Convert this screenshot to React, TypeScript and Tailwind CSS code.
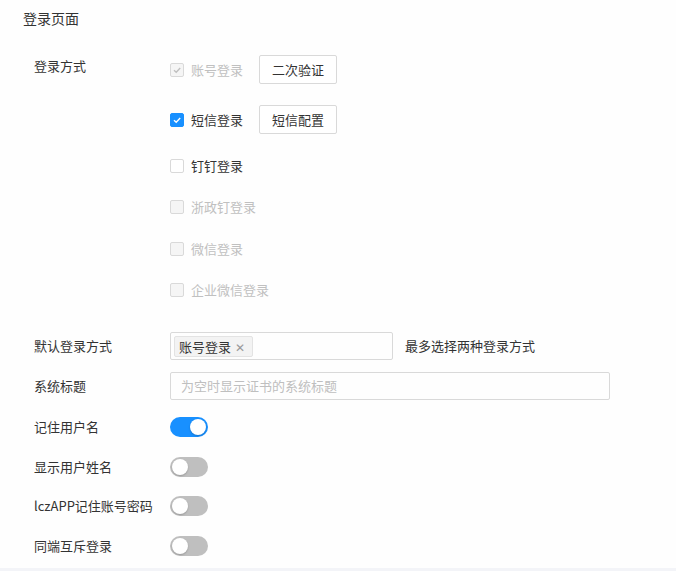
import React from "react";

const font = { fontFamily: '"Noto Sans CJK SC", "Microsoft YaHei", sans-serif' };

function Check({ state }: { state: "dis-checked" | "checked" | "empty" | "dis" }) {
  const cls =
    state === "checked"
      ? "bg-[#1890ff] border-[#1890ff]"
      : state === "empty"
      ? "bg-white border-[#d9d9d9]"
      : "bg-[#f5f5f5] border-[#d9d9d9]";
  return (
    <span className={`w-[14px] h-[14px] rounded-[2px] border flex items-center justify-center ${cls}`}>
      {(state === "checked" || state === "dis-checked") && (
        <svg width="10" height="10" viewBox="0 0 10 10">
          <path
            d="M2 5.2 L4.2 7.2 L8.2 3"
            fill="none"
            stroke={state === "checked" ? "#fff" : "#bfbfbf"}
            strokeWidth="1.4"
          />
        </svg>
      )}
    </span>
  );
}

function Item({
  state,
  label,
  btn,
  className = "",
}: {
  state: "dis-checked" | "checked" | "empty" | "dis";
  label: string;
  btn?: string;
  className?: string;
}) {
  const disabled = state === "dis" || state === "dis-checked";
  return (
    <div className={`flex items-center ${btn ? "h-[29px]" : "h-[20px]"} ${className}`}>
      <Check state={state} />
      <span className={`ml-[7px] text-[13px] leading-[20px] ${disabled ? "text-[#c0c0c0]" : "text-[#333]"}`}>{label}</span>
      {btn && (
        <button className="ml-[16px] h-[29px] w-[78px] border border-[#d9d9d9] rounded-[2px] bg-white text-[13px] text-[#333]">
          {btn}
        </button>
      )}
    </div>
  );
}

function ToggleRow({ label, on, className = "" }: { label: string; on?: boolean; className?: string }) {
  return (
    <div className={`flex items-center h-[20px] ${className}`}>
      <span className="w-[136px] text-[13px] leading-[20px] text-[#333]">{label}</span>
      <span
        className={`relative w-[38px] h-[20px] rounded-full ${on ? "bg-[#1890ff]" : "bg-[#bfbfbf]"}`}
      >
        <span
          className={`absolute top-[2px] w-[16px] h-[16px] rounded-full bg-white shadow-[0_1px_2px_rgba(0,0,0,0.2)] ${
            on ? "left-[20px]" : "left-[2px]"
          }`}
        />
      </span>
    </div>
  );
}

export default function App() {
  return (
    <div className="h-[571px] flex flex-col bg-white" style={font}>
      <div className="flex-1 bg-[#fefefe]">
        <div className="pt-[8px] pl-[23px] h-[28px] text-[14px] leading-[20px] text-[#333]">登录页面</div>
        <div className="pl-[34px]">
          <div className="flex mt-[27px]">
            <span className="w-[136px] mt-[1px] text-[13px] leading-[20px] text-[#333]">登录方式</span>
            <div className="flex flex-col">
              <Item state="dis-checked" label="账号登录" btn="二次验证" />
              <Item state="checked" label="短信登录" btn="短信配置" className="mt-[21px]" />
              <Item state="empty" label="钉钉登录" className="mt-[22px]" />
              <Item state="dis" label="浙政钉登录" className="mt-[21px]" />
              <Item state="dis" label="微信登录" className="mt-[22px]" />
              <Item state="dis" label="企业微信登录" className="mt-[21px]" />
            </div>
          </div>
          <div className="flex items-center h-[28px] mt-[32px]">
            <span className="w-[136px] text-[13px] leading-[20px] text-[#333]">默认登录方式</span>
            <div className="w-[223px] h-[28px] border border-[#d9d9d9] rounded-[2px] flex items-center pl-[3px]">
              <span className="h-[21px] flex items-center bg-[#f3f3f3] border border-[#e3e3e3] rounded-[2px] pl-[4px] pr-[7px]">
                <span className="text-[13px] leading-[19px] text-[#333]">账号登录</span>
                <span className="ml-[4px] text-[12px] leading-[19px] text-[#999]">✕</span>
              </span>
            </div>
            <span className="ml-[12px] text-[13px] leading-[20px] text-[#333]">最多选择两种登录方式</span>
          </div>
          <div className="flex items-center h-[28px] mt-[12px]">
            <span className="w-[136px] text-[13px] leading-[20px] text-[#333]">系统标题</span>
            <div className="w-[440px] h-[28px] border border-[#d9d9d9] rounded-[2px] flex items-center pl-[10px]">
              <span className="text-[13px] leading-[20px] text-[#bfbfbf]">为空时显示证书的系统标题</span>
            </div>
          </div>
          <ToggleRow label="记住用户名" on className="mt-[17px]" />
          <ToggleRow label="显示用户姓名" className="mt-[20px]" />
          <ToggleRow label="lczAPP记住账号密码" className="mt-[19px]" />
          <ToggleRow label="同端互斥登录" className="mt-[20px]" />
        </div>
      </div>
      <div className="h-[3px] bg-[#f3f4f8]" />
    </div>
  );
}
